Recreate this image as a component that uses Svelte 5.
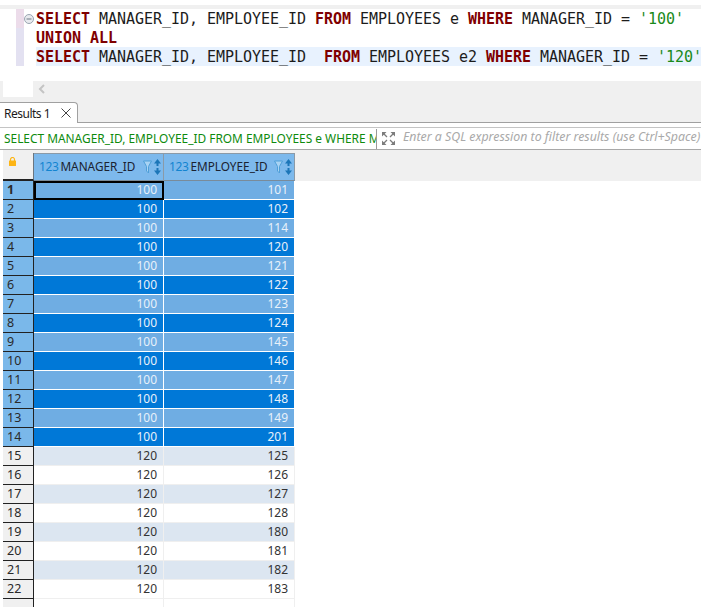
<script>
  const managers = [[100,101],[100,102],[100,114],[100,120],[100,121],[100,122],[100,123],[100,124],[100,145],[100,146],[100,147],[100,148],[100,149],[100,201],[120,125],[120,126],[120,127],[120,128],[120,180],[120,181],[120,182],[120,183]];
  const columns = ['MANAGER_ID', 'EMPLOYEE_ID'];
</script>

<div class="page">
  <div class="topgap"></div>
  <div class="band"></div>
  <section class="editor">
    <div class="gutter"><i class="g1"></i><i class="g2"></i></div>
    <div class="fold"><svg width="12" height="12" viewBox="0 0 12 12"><circle cx="6" cy="6" r="4.500" fill="#e8eaee" stroke="#9aa5b1"/><path d="M3.500 6h5" stroke="#6d7885"/></svg></div>
    <div class="code">
      <div class="line"><b>SELECT</b> MANAGER_ID, EMPLOYEE_ID <b>FROM</b> EMPLOYEES e <b>WHERE</b> MANAGER_ID = <em>'100'</em></div>
      <div class="line"><b>UNION ALL</b></div>
      <div class="line cur"><b>SELECT</b> MANAGER_ID, EMPLOYEE_ID{'  '}<b>FROM</b> EMPLOYEES e2 <b>WHERE</b> MANAGER_ID = <em>'120'</em></div>
    </div>
  </section>
  <div class="hscroll">
    <div class="corner"></div>
    <svg class="chev" width="8" height="10" viewBox="0 0 8 10"><path d="M6 1 2 5l4 4" fill="none" stroke="#c4c4c4" stroke-width="2"/></svg>
  </div>
  <div class="tabs">
    <div class="tab">
      <span class="tablabel">Results 1</span>
      <svg width="10" height="10" viewBox="0 0 10 10"><path d="M.5.500l9 9M9.500.500l-9 9" stroke="#444" stroke-width="1"/></svg>
    </div>
  </div>
  <div class="spacer"></div>
  <div class="filter">
    <div class="q">SELECT MANAGER_ID, EMPLOYEE_ID FROM EMPLOYEES e WHERE M</div>
    <svg class="exp" width="15" height="15" viewBox="0 0 15 15">
      <path d="M1 1h4.500L1 5.500zM14 1H9.500L14 5.500zM1 14h4.500L1 9.500zM14 14H9.500L14 9.500z" fill="#7c7c7c"/>
      <path d="M2 2l4 4M13 2 9 6M2 13l4-4M13 13 9 9" stroke="#7c7c7c" stroke-width="1.300"/>
    </svg>
    <div class="ph">Enter a SQL expression to filter results (use Ctrl+Space)</div>
  </div>
  <div class="grid">
    <div class="head">
      <div class="lockcell">
        <svg width="7" height="9" viewBox="0 0 7 9"><rect y="3.500" width="7" height="5.500" rx=".5" fill="#fdb515"/><path d="M1.500 4V2.500a2 2 0 0 1 4 0V4" fill="none" stroke="#fdb515" stroke-width="1.200"/></svg>
      </div>
      {#each columns as c}
        <div class="hcell">
          <span class="t123">123</span>
          <span class="name">{c}</span>
          <svg class="ficon" width="9" height="14" viewBox="0 0 9 14"><path d="M.5 1h8L5.500 6.500V13L3.500 11V6.500z" fill="#a8d3f3" stroke="#4f9fd8"/></svg>
          <svg class="sicon" width="7" height="16" viewBox="0 0 7 16"><path d="M3.500 0 7 4.500H4.500v2.500h-2V4.500H0zM3.500 16 0 11.500h2.500V9h2v2.500H7z" fill="#1c76b8"/></svg>
        </div>
      {/each}
    </div>
    {#each managers as r, i}
      <div class="row" class:sel={i < 14} class:odd={i % 2 === 0}>
        <div class="rn" class:first={i === 0}>{i + 1}</div>
        <div class="cell a" class:focus={i === 0}>{r[0]}</div>
        <div class="cell b">{r[1]}</div>
      </div>
    {/each}
    <div class="row tail">
      <div class="rn"></div>
      <div class="cell a"></div>
      <div class="cell b"></div>
    </div>
  </div>
</div>

<style>
  :global(body) { margin: 0; background: #fff; }
  .page { width: 701px; height: 607px; overflow: hidden; background: #fff; font-family: "Noto Sans", sans-serif; font-size: 12px; color: #222; }
  .topgap { height: 5px; }
  .band { height: 4px; background: #f0f0f0; }
  .editor { height: 72px; display: flex; padding-left: 3px; background: #fff; box-sizing: border-box; }
  .gutter { width: 8px; margin-left: 13px; display: flex; flex-direction: column; }
  .g1 { height: 19px; background: #ecdcea; }
  .g2 { height: 38px; background: #e3e1f1; }
  .fold { width: 12px; padding-top: 4px; }
  .fold svg { display: block; margin-left: -1px; }
  .code { flex: 1; min-width: 0; font-family: "DejaVu Sans Mono", monospace; font-size: 15px; letter-spacing: -0.03px; color: #1c1c1c; }
  .line { height: 19px; line-height: 21px; white-space: pre; }
  .line b { color: #7f0000; font-weight: 700; }
  .line em { font-style: normal; color: #1a8a1a; }
  .cur { background: #e8f2fe; }
  .hscroll { height: 16px; background: #f0f0f0; display: flex; align-items: center; }
  .corner { width: 30px; height: 16px; margin-left: 3px; background: #fff; }
  .chev { margin-left: 5px; }
  .tabs { height: 26px; background: #f0f0f0; display: flex; align-items: flex-end; box-sizing: border-box; border-bottom: 1px solid #a0a0a0; }
  .tab { width: 78px; height: 21px; margin-bottom: -1px; padding-left: 4px; box-sizing: border-box; background: #fff; border: 1px solid #a0a0a0; border-left: 0; border-bottom: 0; border-top-right-radius: 4px; display: flex; align-items: center; color: #1a1a1a; }
  .tablabel { width: 57px; flex: none; white-space: nowrap; font-size: 12px; letter-spacing: -.5px; }
  .tab svg { flex: none; }
  .spacer { height: 4px; }
  .filter { height: 23px; box-sizing: border-box; border-top: 1px solid #c4c4c4; border-bottom: 1px solid #a8a8a8; display: flex; align-items: center; padding-left: 4px; background: #fff; }
  .q { width: 372px; flex: none; overflow: hidden; white-space: nowrap; color: #0d8a0d; font-size: 11.900px; border-right: 1px solid #9a9a9a; height: 20px; line-height: 18px; }
  .exp { margin-left: 4px; flex: none; }
  .ph { margin-left: 7px; font-style: italic; color: #a9a9a9; white-space: nowrap; font-size: 12.350px; line-height: 18px; padding-bottom: 3px; }
  .grid { background: #fff; }
  .head { height: 31px; margin-left: 3px; background: #f0f0f0; display: flex; align-items: flex-end; }
  .lockcell { width: 31px; height: 28px; box-sizing: border-box; border-right: 1px solid #6b7680; border-bottom: 2px solid #222; padding: 4px 0 0 6px; }
  .lockcell svg { display: block; }
  .hcell { height: 28px; box-sizing: border-box; background: #7db9ec; border-top: 1px solid #8b9aa7; border-right: 1px solid #8b9aa7; border-bottom: 1px solid #7a8b99; display: flex; align-items: center; padding-left: 5px; color: #1b2230; }
  .hcell:nth-child(2) { width: 130px; }
  .hcell:nth-child(3) { width: 131px; }
  .t123 { color: #1284d0; font-size: 12px; margin-right: 2px; margin-bottom: 2px; letter-spacing: -.4px; }
  .name { flex: 1; font-size: 11.800px; white-space: nowrap; margin-bottom: 2px; }
  .ficon { margin-right: 2px; flex: none; }
  .sicon { margin-right: 2px; flex: none; }
  .row { height: 19px; display: flex; margin-left: 3px; }
  .rn { width: 31px; box-sizing: border-box; background: #f0f0f0; border-right: 1px solid #222; border-bottom: 1px solid #222; padding-left: 4px; line-height: 18px; font-size: 12.500px; color: #2a2a2a; }
  .first { font-weight: 700; }
  .cell { box-sizing: border-box; text-align: right; padding-right: 6px; line-height: 18px; border-right: 1px solid #efefef; border-bottom: 1px solid #efefef; color: #333; }
  .a { width: 130px; }
  .b { width: 131px; }
  .odd .cell { background: #dce6f1; }
  .sel .rn { background: #7ab8ea; }
  .sel .cell { background: #0078d7; color: #e8f1fa; border-color: #fff; }
  .sel.odd .cell { background: #6fade3; }
  .focus { outline: 2px solid #000; outline-offset: -2px; }
  .tail { height: 10px; }
</style>
